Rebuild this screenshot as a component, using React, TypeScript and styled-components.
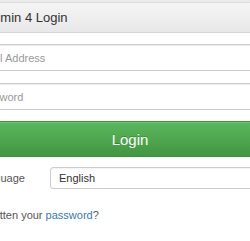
import React from "react";
import styled, { createGlobalStyle } from "styled-components";

const GlobalStyle = createGlobalStyle`
  html, body {
    margin: 0;
    padding: 0;
    background: #fff;
    overflow: hidden;
  }
  body {
    font-family: "Liberation Sans", Arial, sans-serif;
    color: #333;
  }
`;

const Page = styled.div`
  width: 340px;
  margin-left: -40px;
`;

const TopEdge = styled.div`
  height: 2px;
  background: #ebebeb;
`;

const PanelHeading = styled.div`
  height: 29px;
  line-height: 29px;
  border-top: 1px solid #dcdcdc;
  border-bottom: 1px solid #d4d4d4;
  background: linear-gradient(to bottom, #f5f5f5 0%, #e8e8e8 100%);
  padding: 0 10px;
  font-size: 13px;
  color: #333;
`;

const PanelBody = styled.form`
  padding: 11px 8px 0 8px;
  display: flex;
  flex-direction: column;
`;

const TextInput = styled.input<{ $gap?: number }>`
  box-sizing: border-box;
  height: 27px;
  width: 100%;
  margin: 0 0 ${(p) => p.$gap ?? 0}px 0;
  padding: 0 6px;
  border: 1px solid #ccc;
  border-radius: 3px;
  box-shadow: inset 0 1px 1px rgba(0, 0, 0, 0.08);
  font-family: inherit;
  font-size: 11px;
  color: #555;
  outline: none;
  &::placeholder {
    color: #999;
  }
`;

const LoginButton = styled.button`
  box-sizing: border-box;
  height: 36px;
  width: 100%;
  margin-top: 11px;
  border: 1px solid #3e8f3e;
  border-radius: 3px;
  background: linear-gradient(to bottom, #5cb85c 0%, #419641 100%);
  box-shadow: inset 0 1px 0 rgba(255, 255, 255, 0.15);
  color: #fff;
  font-family: inherit;
  font-size: 15px;
  text-shadow: 0 -1px 0 rgba(0, 0, 0, 0.2);
  cursor: pointer;
`;

const LangRow = styled.div`
  display: flex;
  align-items: center;
  margin-top: 10px;
`;

const LangLabel = styled.label`
  width: 82px;
  padding-left: 8px;
  box-sizing: border-box;
  font-size: 11px;
  color: #555;
`;

const LangSelect = styled.div`
  flex: 1;
  box-sizing: border-box;
  height: 22px;
  line-height: 20px;
  padding: 0 8px;
  border: 1px solid #ccc;
  border-radius: 3px;
  box-shadow: inset 0 1px 1px rgba(0, 0, 0, 0.05);
  font-size: 11px;
  color: #333;
`;

const ForgotText = styled.p`
  margin: 18px 0 0 0;
  padding-left: 3px;
  line-height: 16px;
  font-size: 11px;
  color: #555;
  a {
    color: #337ab7;
    text-decoration: none;
  }
`;

export default function App() {
  return (
    <>
      <GlobalStyle />
      <Page>
        <TopEdge />
        <PanelHeading>pgAdmin 4 Login</PanelHeading>
        <PanelBody onSubmit={(e) => e.preventDefault()}>
          <TextInput type="email" placeholder="Email Address" $gap={12} />
          <TextInput type="password" placeholder="Password" />
          <LoginButton type="submit">Login</LoginButton>
          <LangRow>
            <LangLabel>Language</LangLabel>
            <LangSelect>English</LangSelect>
          </LangRow>
          <ForgotText>
            Forgotten your <a href="#">password</a>?
          </ForgotText>
        </PanelBody>
      </Page>
    </>
  );
}
